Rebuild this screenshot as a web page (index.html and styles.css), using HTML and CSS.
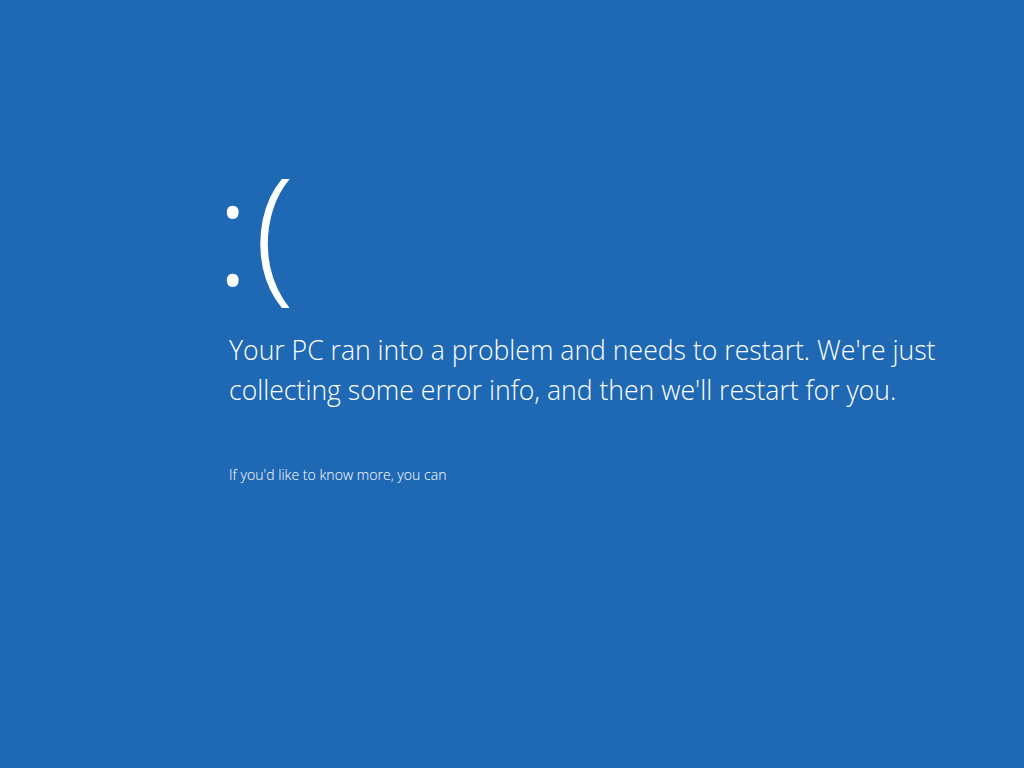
FILE: index.html
```html
<!DOCTYPE html>
<html lang="en">
<head>
  <meta charset="UTF-8" />
  <title>Blue screen</title>
  <link rel="stylesheet" href="styles.css">
</head>
<body>
  <div class="screen">
    <div class="face"><span class="eyes">:</span>(</div>
    <p class="message">Your PC ran into a problem and needs to restart. We're just collecting some error info, and then we'll restart for you.</p>
    <p class="more">If you'd like to know more, you can</p>
  </div>
</body>
</html>
```

FILE: styles.css
```css
* {
  box-sizing: border-box;
}
html, body {
  height: 100%;
}
body {
  margin: 0;
  background-color: #1f68b3;
  color: #fff;
  font-family: "Open Sans", "Liberation Sans", sans-serif;
  font-weight: 300;
  overflow: hidden;
}
.screen {
  padding: 160px 0 0 220px;
}
.face {
  margin-left: -5px;
  font-size: 148px;
  line-height: 135px;
  height: 135px;
}
.eyes {
  font-weight: 350;
  margin-right: 4px;
}
.message {
  margin: 35px 0 0 9px;
  width: 730px;
  font-size: 26.6px;
  line-height: 40px;
}
.more {
  margin: 55px 0 0 9px;
  font-size: 14.1px;
}
```
